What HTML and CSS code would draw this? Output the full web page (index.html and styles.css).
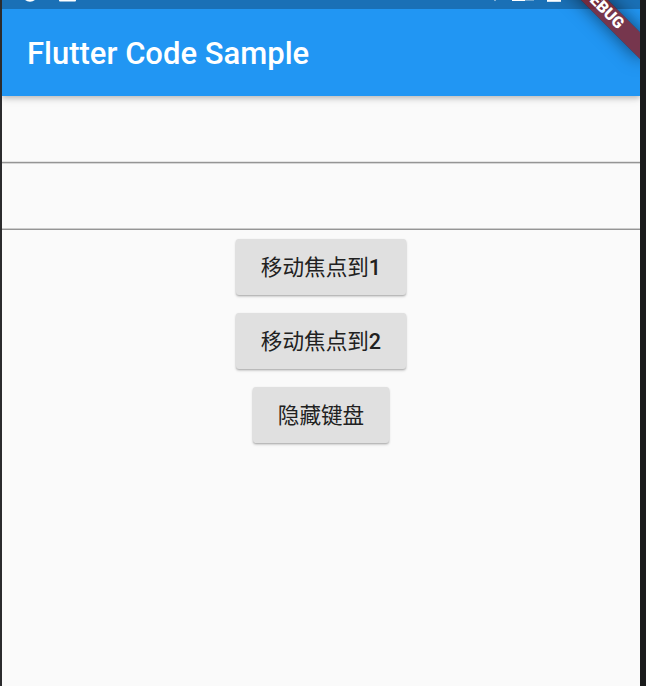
FILE: index.html
```
<!DOCTYPE html>
<html lang="zh-CN">
<head>
<meta charset="utf-8">
<title>Flutter Code Sample</title>
<link rel="stylesheet" href="styles.css">
</head>
<body>
<div class="screen">
  <header class="top">
    <div class="status">
      <svg width="638" height="9" viewBox="2 0 638 9" fill="#fff">
        <circle cx="30" cy="-6.3" r="8"/>
        <rect x="59" y="-12" width="17" height="13.6" rx="1"/>
        <path d="M493-2h4l-2 3.2z"/>
        <rect x="512" y="-8" width="13" height="9"/>
        <rect x="525" y="-8" width="9" height="9" opacity=".35"/>
        <rect x="547" y="-12" width="14" height="13.8"/>
      </svg>
    </div>
    <h1 class="title">Flutter Code Sample</h1>
  </header>
  <main class="content">
    <div class="field field-first"></div>
    <div class="field"></div>
    <div class="actions">
      <button class="button">移动焦点到<span class="digit">1</span></button>
      <button class="button">移动焦点到<span class="digit">2</span></button>
      <button class="button">隐藏键盘</button>
    </div>
  </main>
  <div class="ribbon"><span class="ribbon-label">DEBUG</span></div>
</div>
</body>
</html>
```
FILE: styles.css
```
* { box-sizing: border-box; }
body {
  margin: 0;
  height: 686px;
  padding: 0 6px 0 2px;
  overflow: hidden;
  background: linear-gradient(90deg, #2b2b2d 50%, #1a1b1c 50%);
  font-family: Roboto, "Noto Sans CJK SC", sans-serif;
}
.screen {
  position: relative;
  height: 686px;
  overflow: hidden;
  background: #fafafa;
}
.top {
  height: 96px;
  background: #2196f3;
  box-shadow: 0 2px 5px rgba(0, 0, 0, .2), 0 4px 8px rgba(0, 0, 0, .08);
}
.status {
  height: 9px;
  overflow: hidden;
  background: #1a70b6;
}
.status svg { display: block; }
.title {
  margin: 0;
  padding: 0 25px;
  font-size: 31px;
  line-height: 89px;
  font-weight: 500;
  color: #fff;
}
.field {
  height: 67px;
  border-bottom: 1px solid #959595;
  box-shadow: inset 0 -1px #cccccc;
}
.field-first { box-shadow: inset 0 -1px #e4e4e4, 0 1px #d6d6d6; }
.actions {
  display: flex;
  flex-direction: column;
  align-items: center;
  gap: 18.4px;
  padding-top: 8.6px;
}
.button {
  height: 56px;
  padding: 2px 25px 0;
  border: 0;
  border-radius: 3px;
  background: #e0e0e0;
  color: #212121;
  font: 400 21.6px/54px Roboto, "Noto Sans CJK SC", sans-serif;
  box-shadow: 0 1px 2px rgba(0, 0, 0, .25), 0 2px 3px rgba(0, 0, 0, .1);
}
.digit { font-weight: 500; }
.ribbon {
  position: absolute;
  left: 538.6px;
  top: -.7px;
  width: 124px;
  height: 18.7px;
  transform: rotate(45deg);
  background: rgba(0, 0, 0, .38);
  box-shadow: 0 0 18px rgba(0, 0, 0, .55);
}
.ribbon-label {
  display: block;
  background: rgba(183, 28, 28, .6);
  color: #fff;
  font-size: 15.9px;
  line-height: 18.7px;
  font-weight: 900;
  text-align: center;
}
```
